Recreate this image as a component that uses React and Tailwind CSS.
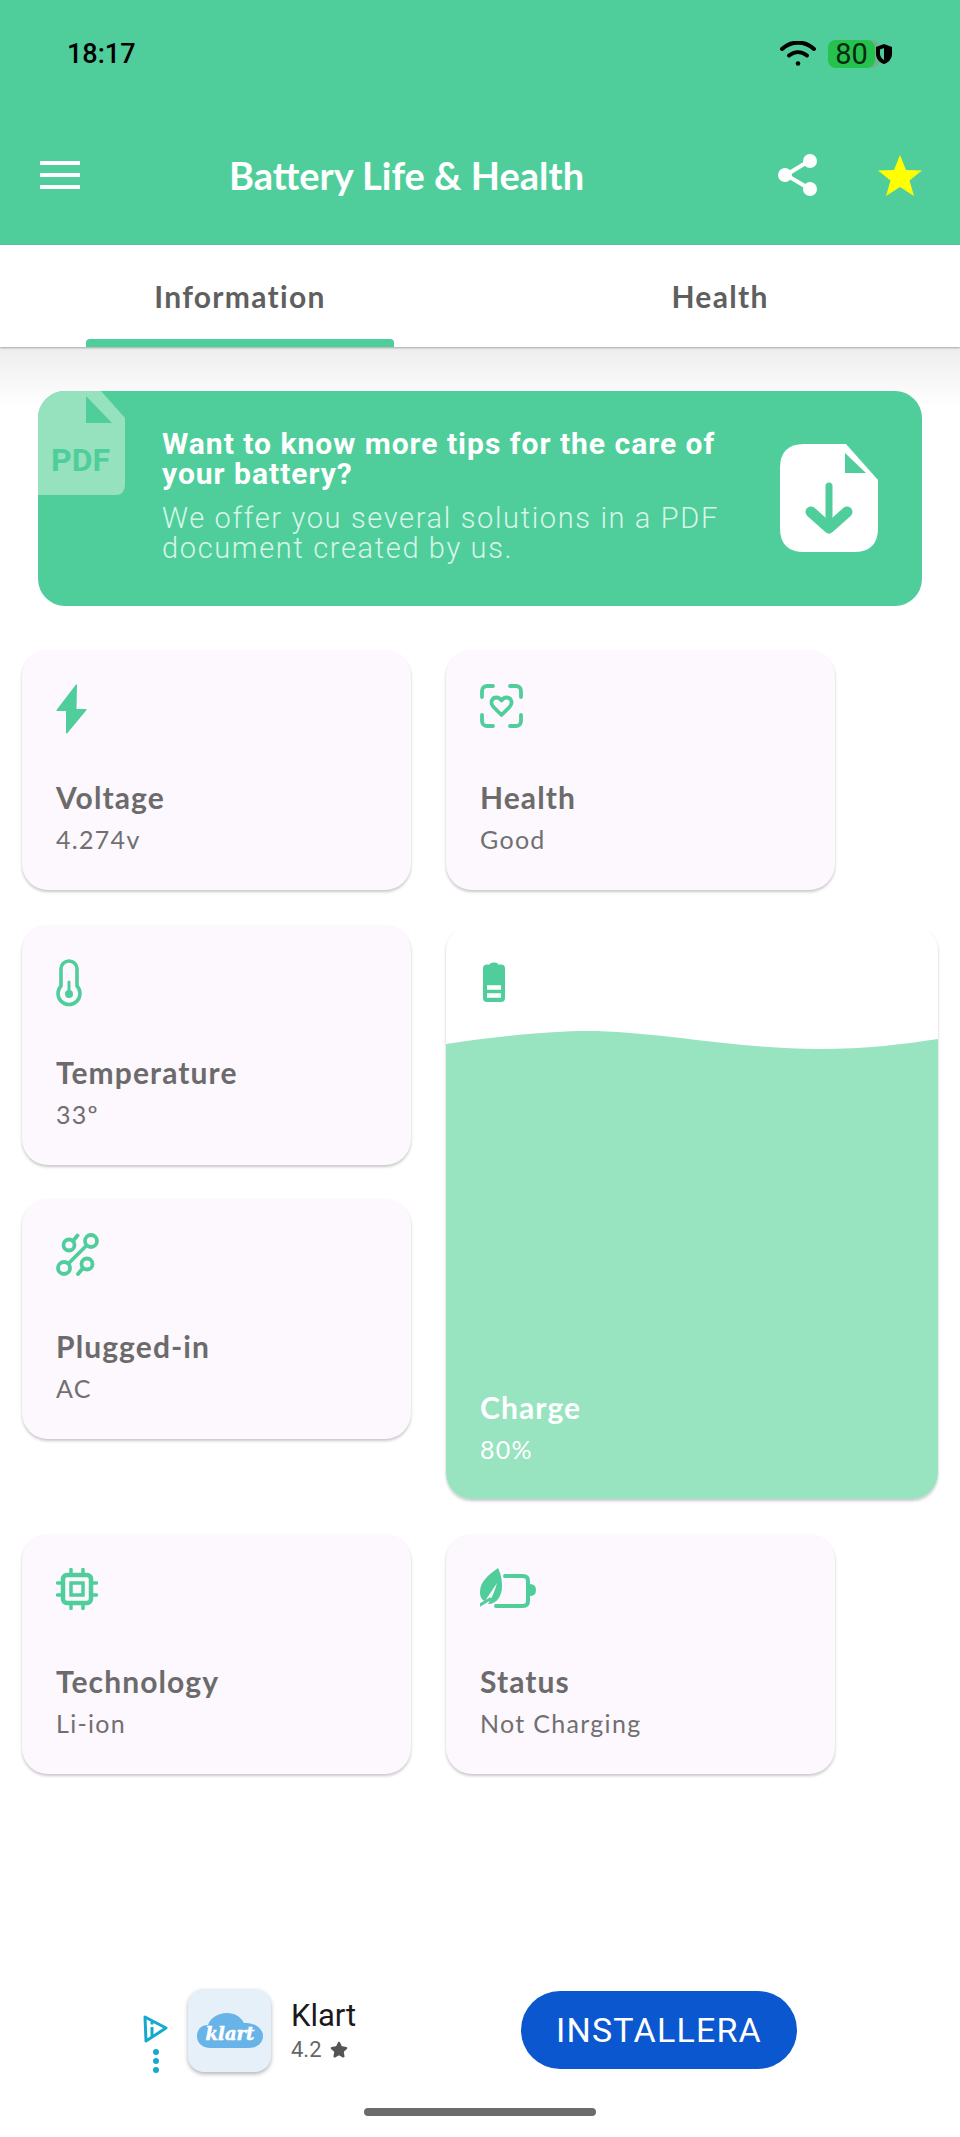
import { Star } from 'lucide-react'

const green = '#4fce9b'

function BoltIcon() {
  return (
    <svg width="32" height="50" viewBox="0 0 32 50" className="block">
      <path d="M20 0.5 L0.5 26 Q0 27 1.5 27 L10 27 L10 49 Q10.5 50 11.5 49 L30.5 26 Q31 25 29.5 25 L20.5 25 L21 1 Q20.5 0 20 0.5 Z" fill={green} />
    </svg>
  )
}

function HealthIcon() {
  return (
    <svg width="43" height="44" viewBox="0 0 43 44" fill="none" stroke={green} strokeWidth="3.8" strokeLinecap="round" className="block">
      <path d="M2 13V7a5 5 0 0 1 5-5h6M30 2h6a5 5 0 0 1 5 5v6M41 31v6a5 5 0 0 1-5 5h-6M13 42H7a5 5 0 0 1-5-5v-6" />
      <path d="M21.5 31 L13.5 23 C9.5 18.5 12 13.5 16.5 13.5 C19 13.500 20.500 15 21.500 16.500 C22.500 15 24 13.500 26.500 13.500 C31 13.500 33.500 18.500 29.500 23 Z" strokeLinejoin="round" />
    </svg>
  )
}

function ThermometerIcon() {
  return (
    <svg width="26" height="48" viewBox="0 0 26 48" fill="none" className="block">
      <path d="M5 27V10a8 8 0 0 1 16 0v17a11 11 0 1 1-16 0Z" stroke={green} strokeWidth="3.6" strokeLinejoin="round" />
      <circle cx="13" cy="35" r="4" fill={green} />
      <path d="M13 23v11" stroke={green} strokeWidth="3" strokeLinecap="round" />
    </svg>
  )
}

function PlugIcon() {
  return (
    <svg width="44" height="44" viewBox="0 0 44 44" fill="none" stroke={green} strokeWidth="3.8" strokeLinecap="round" className="block">
      <circle cx="35" cy="8" r="6" />
      <circle cx="8" cy="35" r="6" />
      <circle cx="13" cy="12" r="5.500" />
      <circle cx="31" cy="31" r="5.500" />
      <path d="M30.500 12.500 L12.500 30.500" />
      <path d="M17 8 L21.500 2.500" />
      <path d="M27 35 L22 41" />
    </svg>
  )
}

function CpuIcon() {
  return (
    <svg width="42" height="42" viewBox="0 0 42 42" fill="none" stroke={green} strokeLinecap="round" className="block">
      <rect x="7" y="7" width="28" height="28" rx="4" strokeWidth="4.500" />
      <rect x="15" y="15" width="12" height="12" strokeWidth="3.500" />
      <path d="M15 1.500V6M27 1.500V6M15 36v4.500M27 36v4.500M1.500 15H6M1.500 27H6M36 15h4.500M36 27h4.500" strokeWidth="3.500" />
    </svg>
  )
}

function StatusIcon() {
  return (
    <svg width="56" height="40" viewBox="0 0 56 40" className="block">
      <path d="M18 0 C8 7 0 14 0 24 C0 29 2 32 5 33 C9 27 13 21 17 15 C15 22 12 30 8 36 C17 36 22 28 22 18 C22 10 20 4 18 0 Z" fill={green} />
      <path d="M0 37 L10 31" stroke={green} strokeWidth="3" strokeLinecap="round" />
      <path d="M25 8 H43 Q48 8 48 13 V33 Q48 38 43 38 H16" fill="none" stroke={green} strokeWidth="4" strokeLinecap="round" />
      <path d="M50 16 Q56 16 56 22 Q56 28 50 28 Z" fill={green} />
    </svg>
  )
}

function BatteryIcon() {
  return (
    <svg width="22" height="40" viewBox="0 0 22 40" className="block">
      <path d="M7 1.500 Q11 -0.500 15 1.500 L15 2.500 H18 a4 4 0 0 1 4 4 V36 a4 4 0 0 1-4 4 H4 a4 4 0 0 1-4-4 V6.500 a4 4 0 0 1 4-4 H7 Z" fill={green} />
      <path d="M4 25.500h14M4 33.500h14" stroke="#ffffff" strokeWidth="4.500" />
    </svg>
  )
}

function InfoCard({ icon, title, value, iconHeight = 'h-[44px]' }) {
  return (
    <div className="flex h-[240px] w-[389px] shrink-0 flex-col rounded-[26px] bg-[#fdf7fe] pl-[34px] pt-[34px] shadow-[0_2px_3px_rgba(0,0,0,0.22)]">
      <div className={iconHeight}>{icon}</div>
      <p className="mt-auto text-[30px] leading-[36px] font-bold tracking-[1.1px] text-[#6b6b6b]">{title}</p>
      <p className="mt-[9px] mb-[36px] text-[25px] leading-[30px] tracking-[1.3px] text-[#707070]">{value}</p>
    </div>
  )
}

export default function App() {
  return (
    <div className="flex h-[2137px] w-[960px] flex-col overflow-hidden bg-white font-['Lato',sans-serif]">
      <header className="h-[245px] shrink-0 bg-[#4fce9b]">
        <div className="flex h-[108px] items-center pl-[67px] pr-[80px] font-['Roboto',sans-serif]">
          <span className="text-[27px] leading-none font-medium text-black">18:17</span>
          <div className="ml-auto flex items-center">
            <svg width="36" height="26" viewBox="0 0 36 26" fill="none" stroke="#000" strokeWidth="4" strokeLinecap="round" className="mr-[12px]">
              <path d="M2 8C11-.5 25-.5 34 8" />
              <path d="M9 14.500c5.500-4.500 12.500-4.500 18 0" />
              <circle cx="18" cy="22.500" r="2.300" fill="#000" stroke="none" />
            </svg>
            <div className="relative flex h-[28px] w-[52px] items-center rounded-[8px] bg-[#6fb48f]">
              <div className="flex h-[28px] w-[47px] items-center justify-center rounded-[8px] bg-[#26c24f] text-[29px] leading-none text-[#06280f]">80</div>
              <svg width="18" height="22" viewBox="0 0 18 22" className="absolute -right-[13px] top-[3px]">
                <path d="M9 1 L17 4 V11 C17 16 13 20 9 21 C5 20 1 16 1 11 V4 Z" fill="#000" />
                <path d="M9 5 L5 6.500 V11 C5 13.500 7 16 9 17 Z" fill="#4fce9b" />
              </svg>
            </div>
          </div>
        </div>
        <div className="flex h-[134px] items-center pl-[40px] pr-[38px]">
          <div className="flex w-[40px] flex-col gap-[8px]">
            <span className="block h-[4px] bg-white" />
            <span className="block h-[4px] bg-white" />
            <span className="block h-[4px] bg-white" />
          </div>
          <h1 className="ml-[149px] text-[38px] leading-none font-bold whitespace-nowrap text-white">Battery Life &amp; Health</h1>
          <svg width="42" height="44" viewBox="0 0 42 44" fill="none" className="ml-auto">
            <path d="M32 8 L9 22 L33 36" stroke="#fff" strokeWidth="4" />
            <circle cx="33" cy="8" r="7" fill="#fff" />
            <circle cx="8" cy="22" r="7" fill="#fff" />
            <circle cx="33" cy="36" r="7" fill="#fff" />
          </svg>
          <svg width="44" height="41" viewBox="0 0 44 41" className="ml-[59px]">
            <path d="M22 0 L28 15 L44 15.500 L31.500 25.500 L36 41 L22 32 L8 41 L12.500 25.500 L0 15.500 L16 15 Z" fill="#ffff00" />
          </svg>
        </div>
      </header>

      <nav className="relative z-10 flex h-[102px] shrink-0 bg-white shadow-[0_1px_2px_rgba(0,0,0,0.3)]">
        <div className="relative flex w-[480px] items-center justify-center">
          <span className="text-[30px] font-bold tracking-[1.3px] text-[#5f5f5f]">Information</span>
          <span className="absolute bottom-0 left-[86px] h-[8px] w-[308px] rounded-t-[4px] bg-[#4fce9b]" />
        </div>
        <div className="flex w-[480px] items-center justify-center">
          <span className="text-[30px] font-bold tracking-[1.3px] text-[#5f5f5f]">Health</span>
        </div>
      </nav>

      <main className="flex flex-1 flex-col bg-gradient-to-b from-[#ededed] to-white to-[60px] pt-[44px]">
        <section className="mx-[38px] flex h-[215px] overflow-hidden rounded-[27px] bg-[#4fce9b] font-['Roboto',sans-serif]">
          <svg width="87" height="104" viewBox="0 0 87 104" className="shrink-0 self-start">
            <path d="M0 0 H63 L87 27 V94 Q87 104 77 104 H0 Z" fill="#96e2bf" />
            <path d="M48 5 L74 32 H48 Z" fill="#4fce9b" />
            <text x="13" y="80" fontFamily="Roboto, sans-serif" fontWeight="700" fontSize="32" fill="#4fce9b">PDF</text>
          </svg>
          <div className="ml-[37px] w-[570px] shrink-0 pt-[38px]">
            <p className="text-[30px] leading-[30px] font-bold tracking-[1px] text-white">Want to know more tips for the care of your battery?</p>
            <p className="mt-[14px] text-[29px] leading-[30px] font-light tracking-[1.65px] text-[#d8f5e8]">We offer you several solutions in a PDF document created by us.</p>
          </div>
          <svg width="98" height="108" viewBox="0 0 98 108" className="ml-[48px] mt-[53px] shrink-0">
            <path d="M24 0 H66 L98 36 V84 Q98 108 74 108 H24 Q0 108 0 84 V24 Q0 0 24 0 Z" fill="#fff" />
            <path d="M65 9 L86 29 H65 Z" fill="#4fce9b" />
            <path d="M49 42 V80" stroke="#4fce9b" strokeWidth="7" strokeLinecap="round" />
            <path d="M31 68 L49 84 L67 68" fill="none" stroke="#4fce9b" strokeWidth="11" strokeLinecap="round" strokeLinejoin="round" />
          </svg>
        </section>

        <div className="mt-[44px] flex flex-col gap-[35px] pl-[22px]">
          <div className="flex gap-[35px]">
            <InfoCard icon={<BoltIcon />} title="Voltage" value="4.274v" />
            <InfoCard icon={<HealthIcon />} title="Health" value="Good" />
          </div>
          <div className="flex gap-[35px]">
            <div className="flex flex-col gap-[34px]">
              <InfoCard icon={<ThermometerIcon />} title="Temperature" value="33º" />
              <InfoCard icon={<PlugIcon />} title="Plugged-in" value="AC" />
            </div>
            <div className="relative flex h-[574px] w-[492px] flex-col overflow-hidden rounded-[26px] bg-white pl-[37px] pt-[37px] shadow-[0_2px_3px_rgba(0,0,0,0.22)]">
              <svg width="492" height="574" viewBox="0 0 492 574" className="absolute inset-0">
                <path d="M0 119 C60 110 110 106 140 106 C210 106 290 124 372 124 C420 124 460 119 492 114 V574 H0 Z" fill="#98e3c0" />
              </svg>
              <div className="relative h-[40px]"><BatteryIcon /></div>
              <p className="relative -ml-[3px] mt-auto text-[30px] leading-[36px] font-bold tracking-[1.1px] text-white">Charge</p>
              <p className="relative -ml-[3px] mt-[9px] mb-[35px] text-[25px] leading-[30px] tracking-[1.3px] text-white">80%</p>
            </div>
          </div>
          <div className="flex gap-[35px]">
            <InfoCard icon={<CpuIcon />} title="Technology" value="Li-ion" />
            <InfoCard icon={<StatusIcon />} title="Status" value="Not Charging" />
          </div>
        </div>

        <div className="mt-auto flex flex-col pb-[21px] font-['Roboto',sans-serif]">
          <div className="ml-[143px] flex h-[84px] w-[654px] items-center">
            <div className="mt-[28px] flex w-[25px] flex-col items-center gap-[6px]">
              <svg width="25" height="28" viewBox="0 0 25 28" fill="none">
                <path d="M2 2 L23 13 L3 26 Z" stroke="#15a9cf" strokeWidth="3" strokeLinejoin="round" />
                <path d="M9 12 V21" stroke="#15a9cf" strokeWidth="3" />
                <circle cx="9" cy="8" r="1.700" fill="#15a9cf" />
              </svg>
              <div className="flex flex-col gap-[3px]">
                <span className="block h-[6px] w-[6px] rounded-full bg-[#15a9cf]" />
                <span className="block h-[6px] w-[6px] rounded-full bg-[#15a9cf]" />
                <span className="block h-[6px] w-[6px] rounded-full bg-[#15a9cf]" />
              </div>
            </div>
            <div className="ml-[20px] flex h-[83px] w-[83px] shrink-0 items-center justify-center rounded-[16px] bg-[#e6f0f9] shadow-[0_2px_4px_rgba(0,0,0,0.3)]">
              <svg width="66" height="35" viewBox="0 0 66 35">
                <path d="M14 35 C4 35 0 29 0 23 C0 16 5 12 11 12 C13 5 21 0 30 0 C38 0 44 4 47 10 C57 9 66 15 66 23 C66 30 60 35 52 35 Z" fill="#68b4e8" />
                <text x="33" y="27" textAnchor="middle" fontFamily="DejaVu Serif, serif" fontWeight="700" fontStyle="italic" fontSize="18" fill="#fff" stroke="#fff" strokeWidth="0.5">klart</text>
              </svg>
            </div>
            <div className="ml-[20px] mt-[4px] w-[230px] shrink-0">
              <p className="text-[31px] leading-[32px] text-[#1a1a1a]">Klart</p>
              <p className="mt-[4px] flex items-center gap-[8px] text-[22px] leading-[28px] text-[#666666]">
                4.2 <Star size={18} fill="#555555" stroke="#555555" />
              </p>
            </div>
            <div className="flex h-[78px] w-[276px] shrink-0 items-center justify-center rounded-full bg-[#0b57d0] text-[34px] tracking-[1.2px] text-white">INSTALLERA</div>
          </div>
          <span className="ml-[364px] mt-[36px] block h-[8px] w-[232px] rounded-full bg-[#6b6b6b]" />
        </div>
      </main>
    </div>
  )
}
